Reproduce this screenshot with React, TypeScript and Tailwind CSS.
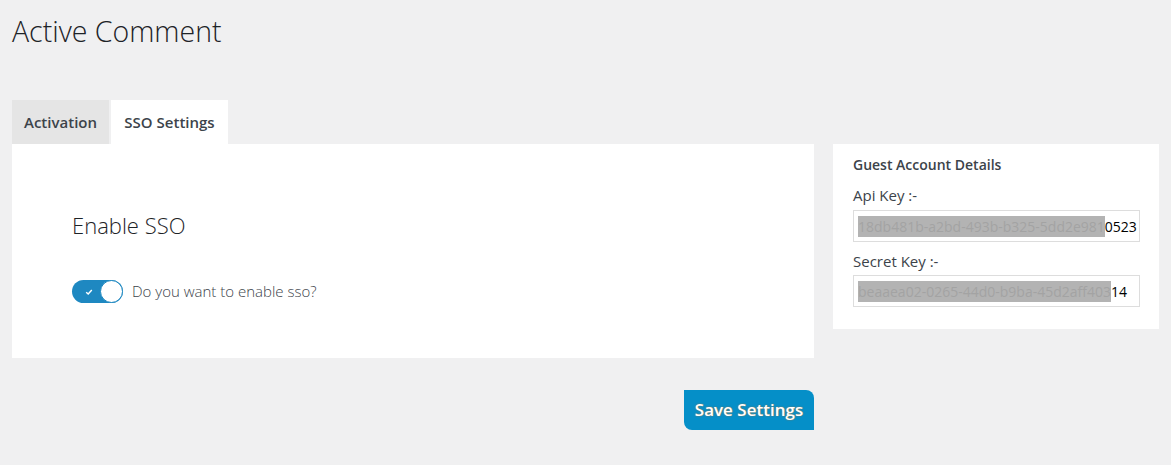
import { useState } from 'react';

function Toggle({ on, onChange }: { on: boolean; onChange: () => void }) {
  return (
    <button
      type="button"
      onClick={onChange}
      className={`relative flex h-[23px] w-[51px] shrink-0 items-center rounded-full ${on ? 'bg-[#1e88c1]' : 'bg-[#cccccc]'}`}
    >
      <svg viewBox="0 0 10 10" className="ml-[13px] h-[8px] w-[8px]">
        <path d="M1.5 5.2 L4 7.5 L8.5 2.5" fill="none" stroke="#ffffff" strokeWidth="1.8" />
      </svg>
      <span className="absolute right-0 top-0 h-[23px] w-[23px] rounded-full border border-[#1e88c1] bg-white" />
    </button>
  );
}

function KeyField({ label, hidden, tail, gap }: { label: string; hidden: string; tail: string; gap: string }) {
  return (
    <div className="flex flex-col">
      <span className={`text-[15px] leading-[20px] text-[#3c434a] ${gap}`}>{label}</span>
      <div className="flex h-[32px] w-[287px] items-center overflow-hidden whitespace-nowrap border border-[#dddddd] bg-white pl-[4px] text-[14px]">
        <span className="bg-[#b3b3b3] text-[#a3a3a3]">{hidden}</span>
        <span className="text-black">{tail}</span>
      </div>
    </div>
  );
}

export default function App() {
  const [tab, setTab] = useState('sso');
  const [sso, setSso] = useState(true);

  return (
    <div className="min-h-[465px] w-full bg-[#f0f0f1] pl-[12px] pt-[12px] font-['Open_Sans','Noto_Sans',sans-serif] text-[#3c434a]">
      <h1 className="text-[28.5px] font-light leading-[38px] text-[#1d2327]">Active Comment</h1>

      <div className="mt-[50px] flex items-start gap-[19px]">
        <div className="flex w-[802px] flex-col">
          {/* Tabs */}
          <div className="flex h-[44px] gap-[2px]">
            <button
              onClick={() => setTab('activation')}
              className={`w-[97px] text-[15px] font-semibold text-[#3c434a] ${tab === 'activation' ? 'bg-white' : 'bg-[#e5e5e5]'}`}
            >
              Activation
            </button>
            <button
              onClick={() => setTab('sso')}
              className={`w-[117px] text-[15px] font-semibold text-[#3c434a] ${tab === 'sso' ? 'bg-white' : 'bg-[#e5e5e5]'}`}
            >
              SSO Settings
            </button>
          </div>

          {/* Settings panel */}
          <div className="flex h-[214px] flex-col bg-white pl-[60px] pt-[66px]">
            <h2 className="text-[22px] font-light leading-[30px] text-[#1d2327]">Enable SSO</h2>
            <div className="mt-[40px] flex items-center gap-[9px]">
              <Toggle on={sso} onChange={() => setSso(!sso)} />
              <span className="text-[15px] font-light text-[#3c434a]">Do you want to enable sso?</span>
            </div>
          </div>

          <div className="mt-[32px] flex justify-end">
            <button className="h-[40px] w-[130px] rounded-tr-[8px] rounded-bl-[8px] bg-[#058fc8] text-[17px] font-semibold text-white [text-shadow:0_0_1.5px_#c0702a]">
              Save Settings
            </button>
          </div>
        </div>

        {/* Guest account */}
        <div className="mt-[44px] flex w-[326px] flex-col bg-white px-[20px] pb-[22px] pt-[11px]">
          <h3 className="mb-[10px] text-[14px] font-semibold leading-[20px] text-[#3c434a]">Guest Account Details</h3>
          <KeyField label="Api Key :-" hidden="18db481b-a2bd-493b-b325-5dd2e981" tail="0523" gap="mb-[5px]" />
          <div className="h-[9px]" />
          <KeyField label="Secret Key :-" hidden="beaaea02-0265-44d0-b9ba-45d2aff403" tail="14" gap="mb-[4px]" />
        </div>
      </div>
    </div>
  );
}
